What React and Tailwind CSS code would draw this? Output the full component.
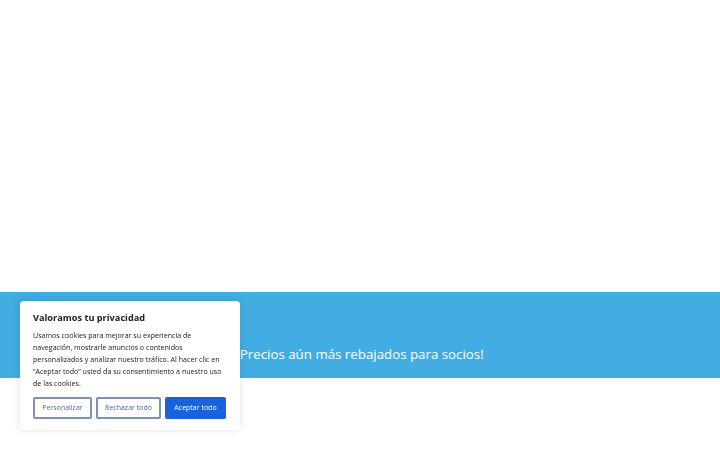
export default function App() {
    return (
        <div className="min-h-screen bg-white relative" style={{ fontFamily: "'Open Sans', sans-serif" }}>
            <div className="h-[292px]" />

            {/* Banner */}
            <div className="h-[86px] bg-[#42ade2] flex items-end justify-center pb-[14px]">
                <p className="text-white text-[13.3px] leading-[20px]">¡Precios aún más rebajados para socios!</p>
            </div>

            {/* Cookie notice */}
            <div className="fixed left-[20px] bottom-[20px] w-[220px] bg-white rounded-[4px] shadow-[0_0_8px_rgba(0,0,0,0.12)] px-[13px] pt-[11px] pb-[11px]">
                <p className="text-[#212121] text-[9.2px] font-bold leading-[12px]">Valoramos tu privacidad</p>
                <p className="text-[#212121] text-[7.1px] leading-[12px] mt-[5px]">
                    Usamos cookies para mejorar su experiencia de navegación, mostrarle anuncios o contenidos personalizados y analizar nuestro tráfico. Al hacer clic en “Aceptar todo” usted da su consentimiento a nuestro uso de las cookies.
                </p>
                <div className="flex gap-[4px] mt-[8px]">
                    <button className="w-[59px] h-[22px] border-2 border-[#7d93b5] rounded-[2px] text-[#4a6da0] text-[7px]">Personalizar</button>
                    <button className="w-[65px] h-[22px] border-2 border-[#7d93b5] rounded-[2px] text-[#4a6da0] text-[7px]">Rechazar todo</button>
                    <button className="w-[61px] h-[22px] bg-[#1863dc] border-2 border-[#1863dc] rounded-[2px] text-white text-[7px]">Aceptar todo</button>
                </div>
            </div>
        </div>
    )
}
